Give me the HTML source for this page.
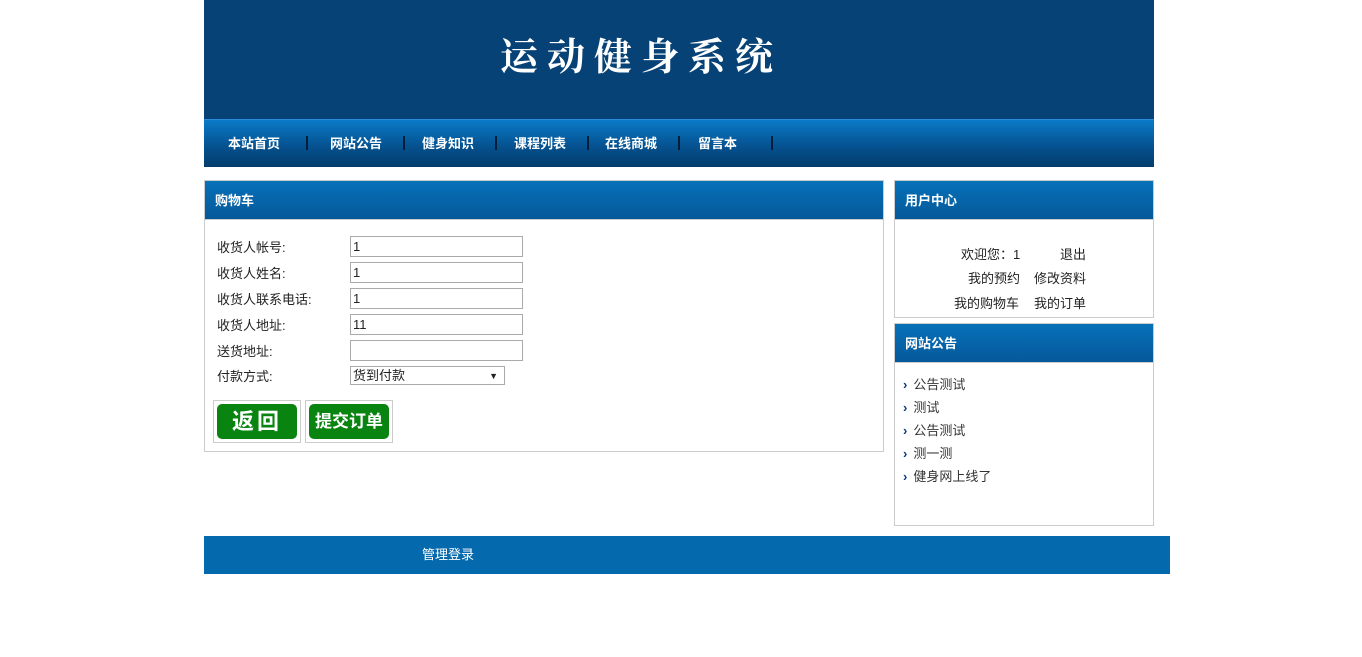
<!DOCTYPE html>
<html><head><meta charset="utf-8"><style>
*{margin:0;padding:0;box-sizing:border-box}
body{width:1362px;height:657px;background:#fff;font-family:"Liberation Sans","Noto Sans CJK SC",sans-serif;font-size:13px;color:#222;position:relative}
.abs{position:absolute}
#hd{left:204px;top:0;width:950px;height:119px;background:#074277}
#hd span{position:absolute;left:296px;top:32px;font-family:"Noto Serif CJK SC",serif;font-size:38px;line-height:44px;color:#fff;letter-spacing:9px;font-weight:bold}
#nav{left:204px;top:119px;width:950px;height:48px;background:linear-gradient(#0a7ac8,#054f8c 60%,#043d6c);border-top:1px solid #2a8ad6}
#nav b{position:absolute;top:13px;color:#fff;font-size:13px}
#nav i{position:absolute;top:16px;width:2px;height:14px;background:#021d3a}
.box{border:1px solid #ccc;background:#fff}
.bh{height:39px;background:linear-gradient(#0771b8,#05589a);color:#fff;font-weight:bold;font-size:13px;line-height:40px;padding-left:10px;border-bottom:1px solid #ccc}
.lab{position:absolute;left:12px;font-size:13px}
.inp{position:absolute;left:145px;width:173px;height:21px;border:1px solid #aaa;font-size:13px;padding-left:2px;line-height:19px}
.btn{position:absolute;top:219px;height:43px;border:1px solid #ccc;padding:3px}
.btn div{background:#0a8410;border-radius:5px;height:35px;color:#fff;font-weight:bold;text-align:center;line-height:35px}
.ann{position:absolute;left:8px;font-size:13px;color:#333}
.ann:before{content:"›";color:#0a3a80;font-weight:bold;margin-right:6px}
</style></head><body>
<div id="hd" class="abs"><span>运动健身系统</span></div>
<div id="nav" class="abs">
<b style="left:24px">本站首页</b><i style="left:102px"></i>
<b style="left:126px">网站公告</b><i style="left:199px"></i>
<b style="left:218px">健身知识</b><i style="left:291px"></i>
<b style="left:310px">课程列表</b><i style="left:383px"></i>
<b style="left:401px">在线商城</b><i style="left:474px"></i>
<b style="left:494px">留言本</b><i style="left:567px"></i>
</div>
<div class="abs box" style="left:204px;top:180px;width:680px;height:272px">
<div class="bh">购物车</div>
<div class="lab" style="top:56px">收货人帐号:</div><div class="inp" style="top:55px">1</div>
<div class="lab" style="top:82px">收货人姓名:</div><div class="inp" style="top:81px">1</div>
<div class="lab" style="top:108px">收货人联系电话:</div><div class="inp" style="top:107px">1</div>
<div class="lab" style="top:134px">收货人地址:</div><div class="inp" style="top:133px">11</div>
<div class="lab" style="top:160px">送货地址:</div><div class="inp" style="top:159px"></div>
<div class="lab" style="top:185px">付款方式:</div><div class="inp" style="top:185px;width:155px;height:19px;line-height:18px">货到付款<span style="position:absolute;right:6px;font-size:9px">▼</span></div>
<div class="btn" style="left:8px;width:88px"><div style="font-size:22px;letter-spacing:3px">返回</div></div>
<div class="btn" style="left:100px;width:88px"><div style="font-size:17px">提交订单</div></div>
</div>
<div class="abs box" style="left:894px;top:180px;width:260px;height:138px">
<div class="bh">用户中心</div>
<div class="abs" style="left:66px;top:63px">欢迎您：1</div><div class="abs" style="left:165px;top:63px">退出</div>
<div class="abs" style="left:73px;top:87px">我的预约</div><div class="abs" style="left:139px;top:87px">修改资料</div>
<div class="abs" style="left:59px;top:112px">我的购物车</div><div class="abs" style="left:139px;top:112px">我的订单</div>
</div>
<div class="abs box" style="left:894px;top:323px;width:260px;height:203px">
<div class="bh">网站公告</div>
<div class="ann" style="top:50px">公告测试</div>
<div class="ann" style="top:73px">测试</div>
<div class="ann" style="top:96px">公告测试</div>
<div class="ann" style="top:119px">测一测</div>
<div class="ann" style="top:142px">健身网上线了</div>
</div>
<div class="abs" style="left:204px;top:536px;width:966px;height:38px;background:#0569ae;color:#fff;font-size:13px;line-height:38px;padding-left:218px">管理登录</div>
</body></html>
